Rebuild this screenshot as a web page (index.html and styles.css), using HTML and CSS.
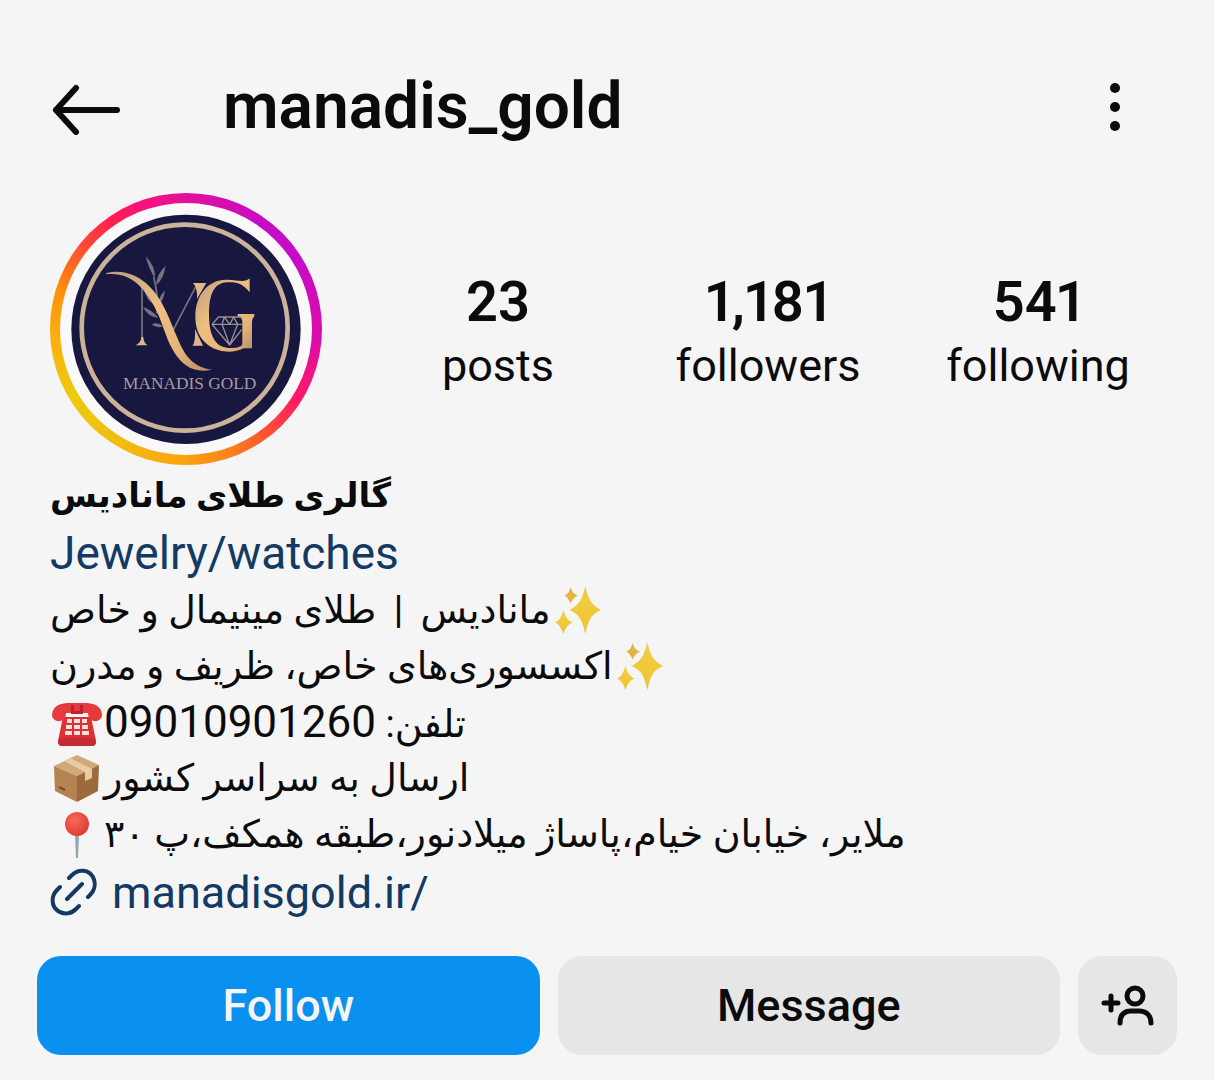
FILE: index.html
```
<!DOCTYPE html>
<html lang="en">
<head>
<meta charset="utf-8">
<meta name="viewport" content="width=device-width, initial-scale=1">
<title>manadis_gold</title>
<link rel="stylesheet" href="styles.css">
</head>
<body>
<svg class="sprite" width="0" height="0" aria-hidden="true">
  <defs>
    <linearGradient id="gold" x1="0" y1="0" x2="0" y2="1">
      <stop offset="0" stop-color="#f3cf48"/><stop offset="1" stop-color="#edc42c"/>
    </linearGradient>
    <linearGradient id="letter" x1="0" y1="0" x2="1" y2="1">
      <stop offset="0" stop-color="#b99a80"/><stop offset="0.4" stop-color="#eebf80"/><stop offset="0.75" stop-color="#e6b478"/><stop offset="1" stop-color="#b08a68"/>
    </linearGradient>
    <radialGradient id="pinhead" cx=".4" cy=".35" r=".7">
      <stop offset="0" stop-color="#f96a5c"/><stop offset="1" stop-color="#dc3a30"/>
    </radialGradient>
    <symbol id="sparkles" viewBox="2 2 44 46">
      <g fill="url(#gold)">
        <path d="M31 2C34 15 37 20 46 25C37 29 34 34 31 48C28 34 25 29 16 25C25 20 28 15 31 2Z"/>
        <path d="M10 25C12 32 14 35 19 37C14 39 12 42 10 48C8 42 6 39 2 37C6 35 8 32 10 25Z"/>
        <path d="M17 3C18.500 8 20 10 24 11C20 13 18.500 15 17 19C15.500 15 14 13 11 11C14 10 15.500 8 17 3Z" fill="#e3b440"/>
      </g>
    </symbol>
  </defs>
</svg>
<main class="profile">
  <header class="topbar">
    <button class="icon-button" type="button" aria-label="Back">
      <svg width="70" height="56" viewBox="0 -4 70 56" fill="none" stroke="#0b0b0b" stroke-width="6" stroke-linecap="round" stroke-linejoin="round"><path d="M66 27H5M25 5L5 27L25 49"/></svg>
    </button>
    <h1 class="username">manadis_gold</h1>
    <button class="icon-button" type="button" aria-label="More options">
      <svg width="10" height="48" viewBox="0 0 10 48" fill="#0b0b0b"><circle cx="5" cy="5" r="5"/><circle cx="5" cy="24" r="5"/><circle cx="5" cy="43" r="5"/></svg>
    </button>
  </header>

  <section class="summary">
    <div class="avatar">
      <svg viewBox="29 38 816 816" role="img" aria-label="Manadis Gold logo">
        <circle cx="437" cy="446" r="378" fill="#f9f9fa"/>
        <circle cx="437" cy="447" r="344" fill="#17173f"/>
        <circle cx="433" cy="442" r="309" fill="none" stroke="#cbb29a" stroke-width="14"/>
        <g fill="none" stroke="#777283" stroke-width="5">
          <path d="M305 315V480M398 450L470 312M350 400C354 350 348 320 340 290"/>
        </g>
        <g fill="#77727f">
          <path d="M316 228Q346 258 344 294Q326 268 316 228ZM376 256Q348 282 348 314Q370 296 376 256ZM310 325Q332 345 342 372Q318 360 310 325ZM374 330Q354 350 352 378Q370 362 374 330ZM308 380Q334 388 354 412Q322 410 308 380ZM334 432Q352 424 368 438Q350 446 334 432Z"/>
        </g>
        <path d="M198 278C250 266 300 284 340 332C378 382 388 420 410 470C430 520 455 562 516 568C462 580 426 558 398 510C372 464 364 410 330 358C294 300 252 276 198 282Z" fill="url(#letter)"/>
        <path d="M285 495Q302 488 303 470H309Q310 488 322 495ZM458 308H498L470 356Q472 322 458 308ZM456 496Q466 488 464 446L488 496Z" fill="#e0b68b"/>
        <path d="M628 294V336C608 308 585 304 560 306C518 308 506 348 506 402C506 465 524 500 564 503C590 504 606 498 606 490V424Q606 412 592 408V401H642V408Q635 414 635 426V504H610C590 514 562 518 536 510C488 496 464 458 465 405C466 342 506 296 560 298C594 299 614 308 628 294Z" fill="url(#letter)"/>
        <g fill="none" stroke="#9b9192" stroke-width="4" stroke-linejoin="round"><path d="M515 432L535 410H600L606 416M515 432H606M515 432L568 494L604 448M545 432L568 494L592 432L580 410L568 432L552 410L545 432"/></g>
        <text x="448" y="626" text-anchor="middle" class="logo-text">MANADIS GOLD</text>
      </svg>
    </div>
    <ul class="stats">
      <li><strong>23</strong><span>posts</span></li>
      <li><strong>1,181</strong><span>followers</span></li>
      <li><strong>541</strong><span>following</span></li>
    </ul>
  </section>

  <section class="bio">
    <h2 class="line heading" lang="fa" dir="rtl">گالری طلای مانادیس</h2>
    <p class="line category">Jewelry/watches</p>
    <p class="line" lang="fa" dir="rtl"><svg class="emoji"><use href="#sparkles"/></svg><span>مانادیس <span class="bar">|</span> طلای مینیمال و خاص</span></p>
    <p class="line" lang="fa" dir="rtl"><svg class="emoji"><use href="#sparkles"/></svg>اکسسوری‌های خاص، ظریف و مدرن</p>
    <p class="line" lang="fa" dir="rtl"><span>تلفن: <span class="phone">09010901260</span></span><svg class="emoji" viewBox="0 -3 50 48">
      <path d="M11 16H39L44 40Q44 45 40 45H10Q6 45 6 40Z" fill="#df2f35"/>
      <path d="M7 37H43L44 42Q43 45 40 45H10Q7 45 6 42Z" fill="#c62b33"/>
      <path d="M0 15Q0 3 15 2H35Q50 3 50 15Q48 21 42 20Q36 19 36 12H14Q14 19 8 20Q2 21 0 15Z" fill="#e53b3f"/>
      <path d="M19 4H22V10H28V4H31V13H19Z" fill="#b8252c"/>
      <g fill="#f3e5dc"><path d="M15 18h5v4h-5zM22 18h6v4h-6zM30 18h5v4h-5zM14 24h6v4h-6zM22 24h6v4h-6zM30 24h6v4h-6zM13 30h7v4h-7zM22 30h6v4h-6zM30 30h7v4h-7z"/></g>
    </svg></p>
    <p class="line" lang="fa" dir="rtl">ارسال به سراسر کشور<svg class="emoji" viewBox="0 0 50 48">
      <path d="M2 12L25 1L47 11L25 22Z" fill="#d3a878"/>
      <path d="M2 12L25 22V48L3 37Z" fill="#b5834f"/>
      <path d="M25 22L47 11L46 37L25 48Z" fill="#9b6a3d"/>
      <path d="M12 7L18 4L40 15V24L33 27V18Z" fill="#e9cba3"/>
      <path d="M7 33L13 36" stroke="#6d4a2b" stroke-width="2"/>
    </svg></p>
    <p class="line" lang="fa" dir="rtl">ملایر، خیابان خیام،پاساژ میلادنور،طبقه همکف،پ ۳۰<svg class="emoji" viewBox="0 -2 50 48">
      <path d="M23 22H27L26 46H24Z" fill="#93a5ad"/><circle cx="25" cy="12" r="12" fill="url(#pinhead)"/>
    </svg></p>
    <a class="line site" href="https://manadisgold.ir/"><svg width="48" height="48" viewBox="-1 0 48 48" fill="none" stroke="#123a63" stroke-width="4" stroke-linecap="round"><path d="M18 10L21 7C28 0 38 2 42 9C45 15 44 22 39 27L37 29M9 19L6 22C0 28 0 38 7 43C13 47 20 46 25 41L28 38M16 31L31 16"/></svg>manadisgold.ir/</a>
  </section>

  <div class="actions">
    <button class="button primary" type="button">Follow</button>
    <button class="button" type="button">Message</button>
    <button class="button square" type="button" aria-label="Suggested accounts">
      <svg width="54" height="42" viewBox="0 -2 54 42" fill="none" stroke="#0b0b0b" stroke-width="5" stroke-linecap="round"><path d="M3 16H17M10 9V23M19 36C19 28 23 24 30 24H38C45 24 50 28 50 36"/><circle cx="34" cy="9" r="8"/></svg>
    </button>
  </div>
</main>
</body>
</html>
```
FILE: styles.css
```
* { box-sizing: border-box; }

body {
  margin: 0;
  background: #f5f5f5;
  color: #0b0b0b;
  font-family: Roboto, "Noto Sans", "DejaVu Sans", sans-serif;
  font-size: 45px;
}

h1, h2, p, ul { margin: 0; padding: 0; }
button { border: 0; font: inherit; color: inherit; }
svg { display: block; flex: none; }
.sprite { position: absolute; }

.profile { padding: 63px 37px 24px; }

.topbar {
  display: flex;
  align-items: center;
  height: 88px;
  padding: 0 57px 0 14px;
}
.icon-button { padding: 0; background: none; }
.username {
  flex: 1;
  margin-left: 102px;
  font-size: 64px;
  font-weight: 600;
  line-height: 88px;
}

.summary {
  display: flex;
  align-items: center;
  gap: 41px;
  padding: 42px 4px 0 13px;
}
.avatar {
  flex: none;
  width: 272px;
  height: 272px;
  border-radius: 50%;
  background: conic-gradient(#e2109a, #c40cc8 35deg, #c60cc6 60deg, #dc0ca8 95deg, #ff1a64 122deg, #ff5032 142deg, #f9821c 160deg, #fba50d 182deg, #f0bc10 210deg, #eccb10 240deg, #fbb00c 265deg, #ff940c 285deg, #ff5a28 304deg, #ff2050 325deg, #fb1080 342deg, #e2109a);
}
.logo-text {
  font-family: "Liberation Serif", serif;
  font-size: 52px;
  fill: #a89ba0;
}

.stats {
  flex: 1;
  display: grid;
  grid-template-columns: repeat(3, 1fr);
  padding-top: 10px;
  list-style: none;
  text-align: center;
}
.stats li { display: flex; flex-direction: column; }
.stats strong {
  font-size: 56px;
  font-weight: 600;
  font-variant-numeric: proportional-nums;
  line-height: 64px;
}
.stats span { line-height: 64px; }

.bio { padding: 1px 13px 0; }
.line {
  display: flex;
  align-items: center;
  justify-content: flex-end;
  height: 56px;
  font-size: 38px;
  font-weight: 400;
  white-space: nowrap;
}
.heading { height: 58px; font-size: 34px; font-weight: 700; }
.category { height: 58px; justify-content: flex-start; color: #123a63; font-size: 46px; }
.bar { margin: 0 8px; font-weight: 500; }
.phone { font-size: 44px; }
.emoji { width: 50px; height: 48px; margin: 0 2px; }
.site {
  height: 60px;
  justify-content: flex-start;
  gap: 14px;
  color: #123a63;
  font-size: 45px;
  text-decoration: none;
}

.actions { display: flex; gap: 18px; margin-top: 34px; }
.button {
  flex: 1;
  display: flex;
  align-items: center;
  justify-content: center;
  height: 99px;
  padding: 0;
  border-radius: 24px;
  background: #e6e6e6;
  font-weight: 500;
}
.primary { background: #0a91ef; color: #f5f5f5; }
.square { flex: none; width: 99px; }
```
